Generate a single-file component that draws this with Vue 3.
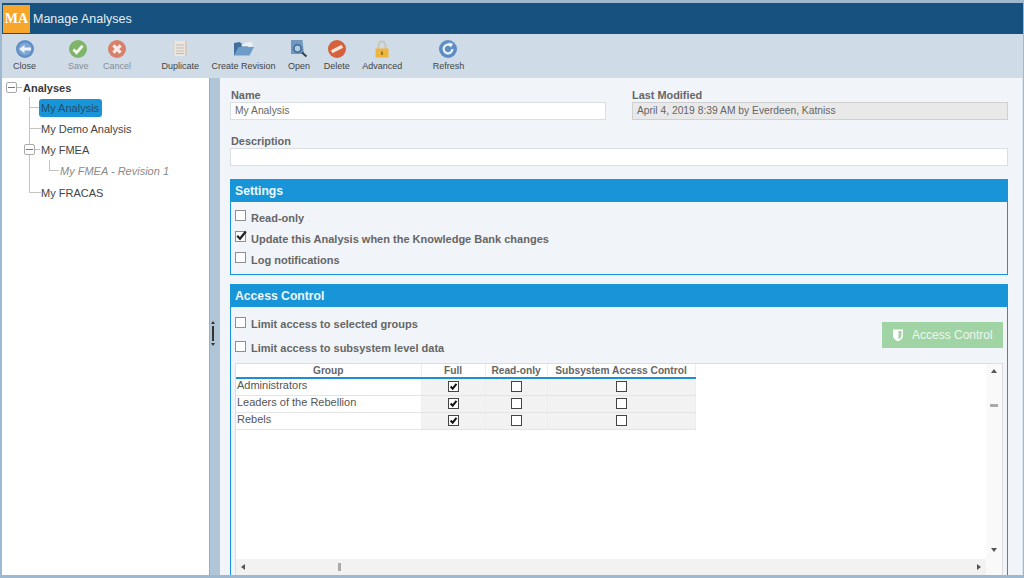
<script setup>
const tools = [
  { label: 'Close', icon: 'close' },
  { label: 'Save', icon: 'save', dim: true, cls: 'sep-wide' },
  { label: 'Cancel', icon: 'cancel', dim: true, cls: 'loose' },
  { label: 'Duplicate', icon: 'dup', cls: 'sep' },
  { label: 'Create Revision', icon: 'folder', cls: 'snug' },
  { label: 'Open', icon: 'open', cls: 'snug' },
  { label: 'Delete', icon: 'del' },
  { label: 'Advanced', icon: 'lock', cls: 'tight' },
  { label: 'Refresh', icon: 'refresh', cls: 'sep' }
]
const groups = ['Administrators', 'Leaders of the Rebellion', 'Rebels']
</script>

<template>
  <div class="app">
    <header class="title">
      <div class="logo">MA</div>
      <span class="title-text">Manage Analyses</span>
    </header>

    <nav class="toolbar">
      <div v-for="t in tools" :key="t.label" class="tool" :class="[t.cls, { dim: t.dim }]">
        <svg class="ticon" viewBox="0 0 20 20">
          <template v-if="t.icon === 'close'">
            <circle cx="10" cy="10" r="9" fill="#5f8fc6" />
            <circle cx="10" cy="10" r="6.500" fill="#7fa7d4" />
            <path d="M16 8.400H9.500V5.800L4.200 10l5.300 4.200v-2.600H16z" fill="#eef3f9" />
          </template>
          <template v-else-if="t.icon === 'save'">
            <circle cx="10" cy="10" r="9" fill="#7fb568" />
            <path d="M5.400 10.400l3.200 3.200 6-6.800" fill="none" stroke="#f4f8f0" stroke-width="2.800" />
          </template>
          <template v-else-if="t.icon === 'cancel'">
            <circle cx="10" cy="10" r="9" fill="#d9806a" />
            <path d="M6.400 6.400l7.200 7.200M13.600 6.400l-7.200 7.200" fill="none" stroke="#f7ece8" stroke-width="3.200" />
          </template>
          <template v-else-if="t.icon === 'dup'">
            <path d="M3 2h14v15H3z" fill="#ece6df" />
            <path d="M15 2h2v15h-2z" fill="#d6c8bc" />
            <path d="M3 2h1.500v15H3z" fill="#dcd3ca" />
            <path d="M6 6h8M6 9h8M6 12h8M6 14.500h8" stroke="#c0bab3" stroke-width="1" />
          </template>
          <template v-else-if="t.icon === 'folder'">
            <path d="M0 4l6-1 1 1.500 7-.5v4H5L0 17z" fill="#3f6f9f" />
            <path d="M5 8h15l-4.500 8.500H0z" fill="#6d9cc9" />
            <path d="M8 4.500l9.500-1.500 1.500 4.500H7.500z" fill="#edf1f4" />
          </template>
          <template v-else-if="t.icon === 'open'">
            <path d="M2 1h11.500l1.500 14H2z" fill="#6f97bf" />
            <circle cx="8.500" cy="9.500" r="3.600" fill="#b4cade" stroke="#2f5f8a" stroke-width="1.400" />
            <path d="M13 13.500l4.500 4" stroke="#33404d" stroke-width="2" />
          </template>
          <template v-else-if="t.icon === 'del'">
            <circle cx="10" cy="10" r="9" fill="#d5603c" />
            <path d="M4.600 12.800L15.400 7.200" fill="none" stroke="#f6e3d8" stroke-width="3.400" />
          </template>
          <template v-else-if="t.icon === 'lock'">
            <path d="M6.500 10V6a3.500 3.500 0 0 1 7 0v4" fill="none" stroke="#c9c7b8" stroke-width="2" />
            <path d="M3.500 9.500h13v9h-13z" fill="#eeb53c" />
            <path d="M9.300 12.500h1.400v3.400H9.300z" fill="#7d5a14" />
          </template>
          <template v-else>
            <circle cx="10" cy="10" r="9" fill="#5f8dc6" />
            <path d="M14.400 10a4.400 4.400 0 1 1-2-3.700" fill="none" stroke="#eef3f9" stroke-width="2.200" />
            <path d="M10.500 3.500l4.600 1.200-2.400 4z" fill="#eef3f9" />
          </template>
        </svg>
        <span class="tlabel">{{ t.label }}</span>
      </div>
    </nav>

    <div class="body">
      <aside class="tree">
        <div class="root-row">
          <span class="box"></span><span class="stub"></span><b>Analyses</b>
        </div>
        <div class="branch">
          <div class="node line"><span class="selected">My Analysis</span></div>
          <div class="node line"><span class="plain">My Demo Analysis</span></div>
          <div class="node line has-box"><span class="box"></span><span class="stub"></span><span class="fmea">My FMEA</span></div>
          <div class="node line sub"><i class="rev">My FMEA - Revision 1</i></div>
          <div class="node last"><span class="plain">My FRACAS</span></div>
        </div>
      </aside>

      <div class="splitter">
        <span class="arrow up"></span>
        <span class="grip"></span>
        <span class="arrow down"></span>
      </div>

      <main class="content">
        <div class="fields">
          <div class="field">
            <label class="inset">Name</label>
            <div class="input">My Analysis</div>
          </div>
          <div class="field">
            <label>Last Modified</label>
            <div class="input ro">April 4, 2019 8:39 AM by Everdeen, Katniss</div>
          </div>
        </div>
        <div class="field desc">
          <label class="inset">Description</label>
          <div class="input"></div>
        </div>

        <section class="panel settings">
          <h2>Settings</h2>
          <div class="settings-body">
            <div class="check"><span class="cb"></span>Read-only</div>
            <div class="check">
              <span class="cb">
                <svg viewBox="0 0 12 12"><path d="M2.200 5.800l2.800 3L10.800 1.500" fill="none" stroke="#222" stroke-width="2.200" /></svg>
              </span>Update this Analysis when the Knowledge Bank changes
            </div>
            <div class="check"><span class="cb"></span>Log notifications</div>
          </div>
        </section>

        <section class="panel access">
          <h2>Access Control</h2>
          <div class="access-top">
            <div class="access-checks">
              <div class="check"><span class="cb"></span>Limit access to selected groups</div>
              <div class="check"><span class="cb"></span>Limit access to subsystem level data</div>
            </div>
            <div class="ac-btn">
              <svg viewBox="0 0 12 14"><path d="M1 1.500h10v6c0 3-2.500 4.800-5 5.800-2.500-1-5-2.800-5-5.800z" fill="#fff" /><path d="M6.500 3h3v4.500c0 1.800-1.500 3-3 3.800z" fill="#a0d4a4" /></svg>
              <span>Access Control</span>
            </div>
          </div>

          <div class="grid-box">
            <div class="grid-main">
              <div class="grid-area">
                <table>
                  <thead>
                    <tr>
                      <th class="c1">Group</th>
                      <th class="c2">Full</th>
                      <th class="c3">Read-only</th>
                      <th class="c4">Subsystem Access Control</th>
                    </tr>
                  </thead>
                  <tbody>
                    <tr v-for="g in groups" :key="g">
                      <td class="c1 name">{{ g }}</td>
                      <td class="c2 mid"><span class="tcb"><svg viewBox="0 0 10 10"><path d="M1.800 5l2.300 2.400L8.300 2.200" fill="none" stroke="#111" stroke-width="2.200" /></svg></span></td>
                      <td class="c3 mid"><span class="tcb"></span></td>
                      <td class="c4 mid"><span class="tcb"></span></td>
                    </tr>
                  </tbody>
                </table>
              </div>
              <div class="hscroll">
                <span class="tri left"></span>
                <span class="hgrip"></span>
                <span class="tri right"></span>
              </div>
            </div>
            <div class="vscroll">
              <span class="tri top"></span>
              <span class="vgrip"></span>
              <span class="tri bottom"></span>
            </div>
          </div>
        </section>
      </main>
    </div>
  </div>
</template>

<style>
html, body { margin: 0; background: #8faec6; }
</style>

<style scoped>
* { box-sizing: border-box; }
.app {
  width: 1024px;
  height: 578px;
  overflow: hidden;
  display: flex;
  flex-direction: column;
  padding: 3px 1px 3px 2px;
  background: #9db8cf;
  font-family: "Liberation Sans", Arial, sans-serif;
  color: #555;
}
.title {
  height: 31px;
  flex: none;
  background: #16517f;
  display: flex;
  align-items: center;
  padding-left: 1px;
  gap: 3px;
}
.logo {
  width: 27px;
  height: 28px;
  background: #f5a62b;
  color: #fff;
  font-family: "Liberation Serif", serif;
  font-weight: 700;
  font-size: 14px;
  line-height: 28px;
  text-align: center;
}
.title-text { color: #e8eff5; font-size: 12.500px; }
.toolbar {
  height: 44px;
  flex: none;
  background: #cfdce7;
  display: flex;
  padding: 5px 0 0 11px;
  gap: 13.500px;
}
.tool {
  display: flex;
  flex-direction: column;
  align-items: center;
  color: #444;
}
.tool.sep { margin-left: 17px; }
.tool.sep-wide { margin-left: 18.500px; }
.tool.loose { margin-left: 1px; }
.tool.snug { margin-left: -1px; }
.tool.tight { margin-left: -1px; }
.tool.dim { color: #858f98; }
.ticon { width: 20px; height: 20px; flex: none; }
.tlabel { font-size: 9px; margin-top: 2px; white-space: nowrap; line-height: 11px; }
.body { flex: 1; display: flex; min-height: 0; }

.tree {
  width: 207px;
  flex: none;
  background: #fff;
  padding-top: 1px;
  font-size: 11px;
  color: #444;
}
.root-row { display: flex; align-items: center; height: 18px; padding-bottom: 1px; padding-left: 4px; color: #333; }
.box {
  width: 11px;
  height: 11px;
  border: 1px solid #aaa;
  border-radius: 2px;
  background: linear-gradient(#777, #777) center / 7px 1px no-repeat #fff;
  flex: none;
}
.stub { width: 5px; height: 1px; background: #bbb; flex: none; margin-right: 1px; }
.root-row b { font-size: 11px; color: #3a3a3a; }
.node {
  height: 21px;
  display: flex;
  align-items: center;
  padding-left: 39px;
  background-repeat: no-repeat;
}
.node.line {
  background-image: linear-gradient(#c4c4c4, #c4c4c4), linear-gradient(#c4c4c4, #c4c4c4);
  background-size: 1px 100%, 12px 1px;
  background-position: 27px 0, 27px 10px;
}
.node.last {
  height: 22px;
  padding-top: 1px;
  background-image: linear-gradient(#c4c4c4, #c4c4c4), linear-gradient(#c4c4c4, #c4c4c4);
  background-size: 1px 11px, 12px 1px;
  background-position: 27px 0, 27px 11px;
}
.node.has-box { padding-left: 22px; background-size: 1px 100%, 0 0; }
.node.has-box .fmea { color: #444; }
.node.sub {
  padding-left: 58px;
  background-image: linear-gradient(#c4c4c4, #c4c4c4), linear-gradient(#c4c4c4, #c4c4c4), linear-gradient(#c4c4c4, #c4c4c4);
  background-size: 1px 100%, 1px 11px, 10px 1px;
  background-position: 27px 0, 47px 0, 47px 10px;
}
.selected {
  background: #1795d8;
  color: #244c6c;
  border-radius: 3px;
  padding: 0 3px 0 2px;
  height: 18px;
  line-height: 18px;
  margin-left: -2px;
}
.rev { color: #8a8a8a; }

.splitter {
  width: 11px;
  flex: none;
  background: #b0c5d6;
  border-left: 1px solid #94aec3;
  display: flex;
  flex-direction: column;
  align-items: center;
  justify-content: center;
  gap: 2px;
  padding-top: 13px;
  padding-right: 4px;
}
.grip { width: 2px; height: 15px; background: #333; }
.arrow { width: 0; height: 0; border-left: 2px solid transparent; border-right: 2px solid transparent; }
.arrow.up { border-bottom: 3px solid #333; }
.arrow.down { border-top: 3px solid #333; }

.content {
  flex: 1;
  min-width: 0;
  background: #f1f5f9;
  padding: 10px 14px 0 10px;
  display: flex;
  flex-direction: column;
  border-right: 1px solid #dfe7ee;
}
.fields { display: flex; gap: 26px; }
.field { display: flex; flex-direction: column; flex: 1; }
label { font-size: 10.900px; font-weight: 700; color: #666; line-height: 12px; height: 12px; margin: 1px 0 1px 0; }
label.inset { margin-left: 1px; }
.input {
  height: 18px;
  background: #fff;
  border: 1px solid #dadfe3;
  font-size: 10.300px;
  line-height: 16px;
  padding-left: 4px;
  color: #666;
}
.input.ro { background: #e9e9e9; border-color: #d0d0d0; }
.field.desc { margin-top: 14px; flex: none; }
.panel { border: 1px solid #1795d8; margin-top: 13px; }
h2 {
  margin: 0;
  height: 22px;
  background: #1795d8;
  color: #eef7fc;
  font-size: 12.200px;
  font-weight: 700;
  line-height: 22px;
  padding-left: 4px;
}
.settings { height: 96px; flex: none; }
.settings h2 { line-height: 23px; }
.settings-body { padding-top: 5px; }
.check {
  display: flex;
  align-items: center;
  height: 21px;
  padding-left: 4px;
  font-size: 11px;
  font-weight: 700;
  color: #666;
  white-space: nowrap;
}
.cb {
  width: 11px;
  height: 11px;
  border: 1px solid #8f8f8f;
  background: #fff;
  margin-right: 5px;
  flex: none;
  margin-top: -4px;
}
.cb svg { display: block; width: 12px; height: 12px; margin: -2px 0 0 -1px; }
.access { margin-top: 9px; flex: 1; min-height: 0; border-bottom: 0; display: flex; flex-direction: column; }
.access-top { display: flex; justify-content: space-between; height: 56px; flex: none; padding-right: 4px; }
.access-checks { padding-top: 5px; }
.access-checks .check { height: 24px; }
.ac-btn {
  width: 121px;
  height: 26px;
  margin-top: 15px;
  background: #a0d4a4;
  color: #eef7ef;
  font-size: 12px;
  display: flex;
  align-items: center;
  padding-left: 10px;
  gap: 8px;
}
.ac-btn svg { width: 12px; height: 14px; }
.grid-box {
  margin: 0 4px;
  flex: 1;
  min-height: 0;
  border: 1px solid #ddd;
  border-bottom: 0;
  background: #fff;
  display: flex;
}
.grid-main { flex: 1; min-width: 0; display: flex; flex-direction: column; }
.grid-area { flex: 1; min-height: 0; }
table { border-collapse: collapse; table-layout: fixed; width: 459px; font-size: 11px; color: #555; }
.c1 { width: 185px; }
.c2 { width: 64px; }
.c3 { width: 62px; }
.c4 { width: 148px; }
th {
  height: 14px;
  padding: 0;
  font-size: 10.200px;
  color: #666;
  text-align: center;
  border-bottom: 2px solid #1b8fcf;
  border-right: 1px solid #eee;
  line-height: 12px;
}
td {
  height: 17px;
  padding: 0;
  border-bottom: 1px solid #e4e4e4;
  border-right: 1px solid #eee;
}
td.name { padding: 0 0 4px 1px; line-height: 12px; white-space: nowrap; }
td.mid { background: #f2f2f2; text-align: center; line-height: 0; vertical-align: middle; padding-bottom: 1px; }
.tcb {
  display: inline-block;
  width: 11px;
  height: 11px;
  border: 1px solid #444;
  background: #fff;
  vertical-align: middle;
}
.tcb svg { display: block; width: 9px; height: 9px; }
.hscroll {
  height: 16px;
  flex: none;
  background: #f2f2f2;
  display: flex;
  align-items: center;
  padding: 0 5px;
}
.hgrip { width: 3px; height: 8px; background: #aaa; margin-left: 93px; }
.tri.right { margin-left: auto; }
.vscroll {
  width: 16px;
  flex: none;
  background: #f9f9f9;
  display: flex;
  flex-direction: column;
  align-items: center;
  padding: 5px 0 0;
}
.vgrip { width: 8px; height: 3px; background: #aaa; margin-top: 31px; }
.tri.bottom { margin-top: auto; margin-bottom: 23px; }
.tri { width: 0; height: 0; }
.tri.left { border-top: 3px solid transparent; border-bottom: 3px solid transparent; border-right: 4px solid #555; }
.tri.right { border-top: 3px solid transparent; border-bottom: 3px solid transparent; border-left: 4px solid #555; }
.tri.top { border-left: 3px solid transparent; border-right: 3px solid transparent; border-bottom: 4px solid #555; }
.tri.bottom { border-left: 3px solid transparent; border-right: 3px solid transparent; border-top: 4px solid #555; }
</style>
